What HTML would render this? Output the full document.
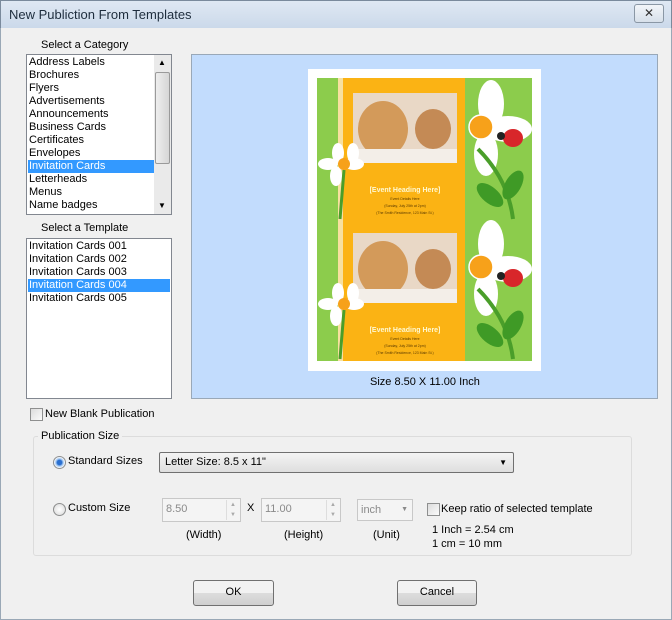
<!DOCTYPE html>
<html><head><meta charset="utf-8"><style>
*{box-sizing:border-box;margin:0;padding:0}
body{width:672px;height:620px;overflow:hidden;background:#f0f0f0;font-family:"Liberation Sans",sans-serif;font-size:11px;color:#000;position:relative}
.a{position:absolute}
.title{left:0;top:0;width:672px;height:28px;background:linear-gradient(#dfe8f3,#cbd9ea);border:1px solid #7a8a9c;border-bottom:none}
.title span{position:absolute;left:8px;top:6px;font-size:13px;color:#1e2d3d}
.xb{left:634px;top:4px;width:30px;height:19px;border:1px solid #8a97a5;border-radius:3px;background:linear-gradient(#f2f5f9,#d7e0ea);text-align:center;font-size:12px;line-height:16px;color:#333}
.frame{left:0;top:28px;width:672px;height:592px;border:1px solid #9aa8b6;border-top:none;background:#f0f0f0}
.list{background:#fff;border:1px solid #828790}
.it{position:absolute;left:2px;height:13px;line-height:13px;font-size:11px;white-space:nowrap}
.sel{background:#3399ff;color:#fff;}
.lab{font-size:11px}
.btn{border:1px solid #707070;border-radius:3px;background:linear-gradient(#f2f2f2 50%,#dddddd 50%,#cfcfcf);text-align:center;line-height:23px;font-size:11px}
.spin{background:#f4f4f4;border:1px solid #c8c8c8;color:#8a8a8a;padding-left:3px;line-height:20px}
.cb{width:13px;height:13px;border:1px solid #8e8f8f;background:linear-gradient(135deg,#dcdcdc,#fbfbfb)}
.rad{width:13px;height:13px;border-radius:50%;border:1px solid #8e8f8f;background:radial-gradient(#fff,#d8d8d8)}
</style></head><body>
<div class="a frame"></div>
<div class="a title"><span>New Publiction From Templates</span></div>
<div class="a xb">✕</div>

<div class="a lab" style="left:41px;top:39px;font-size:11px">Select a Category</div>
<div class="a list" style="left:26px;top:54px;width:146px;height:161px">
<div class="it" style="top:1px">Address Labels</div>
<div class="it" style="top:14px">Brochures</div>
<div class="it" style="top:27px">Flyers</div>
<div class="it" style="top:40px">Advertisements</div>
<div class="it" style="top:53px">Announcements</div>
<div class="it" style="top:66px">Business Cards</div>
<div class="it" style="top:79px">Certificates</div>
<div class="it" style="top:92px">Envelopes</div>
<div class="it sel" style="top:105px;left:1px;width:126px;padding-left:1px">Invitation Cards</div>
<div class="it" style="top:118px">Letterheads</div>
<div class="it" style="top:131px">Menus</div>
<div class="it" style="top:144px">Name badges</div>
<div class="a" style="left:127px;top:0;width:17px;height:159px;background:#eaeaea"></div>
<div class="a" style="left:128px;top:17px;width:15px;height:92px;border:1px solid #9a9a9a;border-radius:2px;background:linear-gradient(90deg,#eee,#d6d6d6)"></div>
<div class="a" style="left:131px;top:3px;font-size:8px">▲</div>
<div class="a" style="left:131px;top:146px;font-size:8px">▼</div>
</div>

<div class="a lab" style="left:41px;top:222px">Select a Template</div>
<div class="a list" style="left:26px;top:238px;width:146px;height:161px">
<div class="it" style="top:1px">Invitation Cards 001</div>
<div class="it" style="top:14px">Invitation Cards 002</div>
<div class="it" style="top:27px">Invitation Cards 003</div>
<div class="it sel" style="top:40px;left:1px;width:142px;padding-left:1px">Invitation Cards 004</div>
<div class="it" style="top:53px">Invitation Cards 005</div>
</div>

<div class="a" style="left:191px;top:54px;width:467px;height:345px;background:#c2dcfd;border:1px solid #99a8b8"></div>
<svg class="a" style="left:308px;top:69px" width="233" height="302" viewBox="0 0 233 302">
<rect width="233" height="302" fill="#fff"/>
<rect x="9" y="9" width="215" height="283" fill="#8ccc4c"/>
<rect x="30" y="9" width="127" height="283" fill="#f7e0a0"/>
<rect x="35" y="9" width="122" height="283" fill="#fbb314"/>
<g id="h">
<rect x="45" y="24" width="104" height="70" fill="#e9d8c6"/>
<ellipse cx="75" cy="60" rx="25" ry="28" fill="#d39a5a"/>
<rect x="45" y="80" width="104" height="14" fill="#f3eee8"/>
<ellipse cx="125" cy="60" rx="18" ry="20" fill="#c48a55"/>
<text x="97" y="123" font-size="7" font-weight="bold" fill="#fff8d0" text-anchor="middle" font-family="Liberation Sans">[Event Heading Here]</text>
<text x="97" y="131" font-size="3.5" fill="#5a3a00" text-anchor="middle" font-family="Liberation Sans">Event Details Here</text>
<text x="97" y="138" font-size="3.5" fill="#5a3a00" text-anchor="middle" font-family="Liberation Sans">(Sunday, July 25th at 2pm)</text>
<text x="97" y="145" font-size="3.5" fill="#5a3a00" text-anchor="middle" font-family="Liberation Sans">(The Smith Residence, 123 Main St.)</text>
<g fill="#fff"><ellipse cx="183" cy="35" rx="13" ry="24"/><ellipse cx="200" cy="60" rx="24" ry="13"/><ellipse cx="178" cy="85" rx="12" ry="22"/></g>
<circle cx="173" cy="58" r="12" fill="#f7a11a" stroke="#fff" stroke-width="1.5"/>
<path d="M170 80 Q200 110 205 150" stroke="#4a9e2a" stroke-width="4" fill="none"/>
<ellipse cx="205" cy="116" rx="8" ry="16" fill="#3f9a26" transform="rotate(30 205 116)"/>
<ellipse cx="182" cy="126" rx="8" ry="16" fill="#3f9a26" transform="rotate(-50 182 126)"/>
<ellipse cx="205" cy="69" rx="10" ry="9" fill="#d8262a"/>
<circle cx="193" cy="67" r="4" fill="#222"/>
<g fill="#fff"><ellipse cx="30" cy="84" rx="6" ry="10"/><ellipse cx="20" cy="95" rx="10" ry="6"/><ellipse cx="46" cy="95" rx="10" ry="6"/><ellipse cx="28" cy="107" rx="6" ry="10"/><ellipse cx="45" cy="84" rx="6" ry="10"/></g>
<circle cx="36" cy="95" r="6" fill="#f7a11a"/>
<path d="M36 101 L32 150" stroke="#4a9e2a" stroke-width="3"/>
</g>
<use href="#h" y="140"/>
</svg>
<div class="a" style="left:370px;top:376px;font-size:11px">Size 8.50 X 11.00 Inch</div>

<div class="a cb" style="left:30px;top:408px"></div>
<div class="a" style="left:45px;top:408px">New Blank Publication</div>
<div class="a" style="left:33px;top:436px;width:599px;height:120px;border:1px solid #dcdcdc;border-radius:3px"></div>
<div class="a" style="left:38px;top:430px;padding:0 3px;background:#f0f0f0">Publication Size</div>
<div class="a rad" style="left:53px;top:456px;background:radial-gradient(#2a6fd0 30%,#9cc3f0 45%,#fff 70%)"></div>
<div class="a" style="left:68px;top:455px">Standard Sizes</div>
<div class="a" style="left:159px;top:452px;width:355px;height:21px;border:1px solid #707070;border-radius:2px;background:linear-gradient(#f4f4f4,#dedede);padding-left:5px;line-height:19px">Letter Size: 8.5 x 11"<span style="position:absolute;right:6px;top:0;font-size:8px">▼</span></div>
<div class="a rad" style="left:53px;top:503px"></div>
<div class="a" style="left:68px;top:502px">Custom Size</div>
<div class="a spin" style="left:162px;top:498px;width:79px;height:24px">8.50</div>
<div class="a" style="left:226px;top:500px;width:13px;height:20px;border-left:1px solid #ddd;font-size:6px;color:#aaa;text-align:center;line-height:10px">▲<br>▼</div>
<div class="a" style="left:247px;top:502px">X</div>
<div class="a spin" style="left:261px;top:498px;width:80px;height:24px">11.00</div>
<div class="a" style="left:326px;top:500px;width:13px;height:20px;border-left:1px solid #ddd;font-size:6px;color:#aaa;text-align:center;line-height:10px">▲<br>▼</div>
<div class="a spin" style="left:357px;top:499px;width:56px;height:22px">inch<span style="position:absolute;right:4px;font-size:7px">▼</span></div>
<div class="a cb" style="left:427px;top:503px"></div>
<div class="a" style="left:441px;top:503px">Keep ratio of selected template</div>
<div class="a" style="left:186px;top:529px">(Width)</div>
<div class="a" style="left:284px;top:529px">(Height)</div>
<div class="a" style="left:373px;top:529px">(Unit)</div>
<div class="a" style="left:432px;top:524px">1 Inch = 2.54 cm</div>
<div class="a" style="left:432px;top:538px">1 cm = 10 mm</div>
<div class="a btn" style="left:193px;top:580px;width:81px;height:26px">OK</div>
<div class="a btn" style="left:397px;top:580px;width:80px;height:26px">Cancel</div>
</body></html>
